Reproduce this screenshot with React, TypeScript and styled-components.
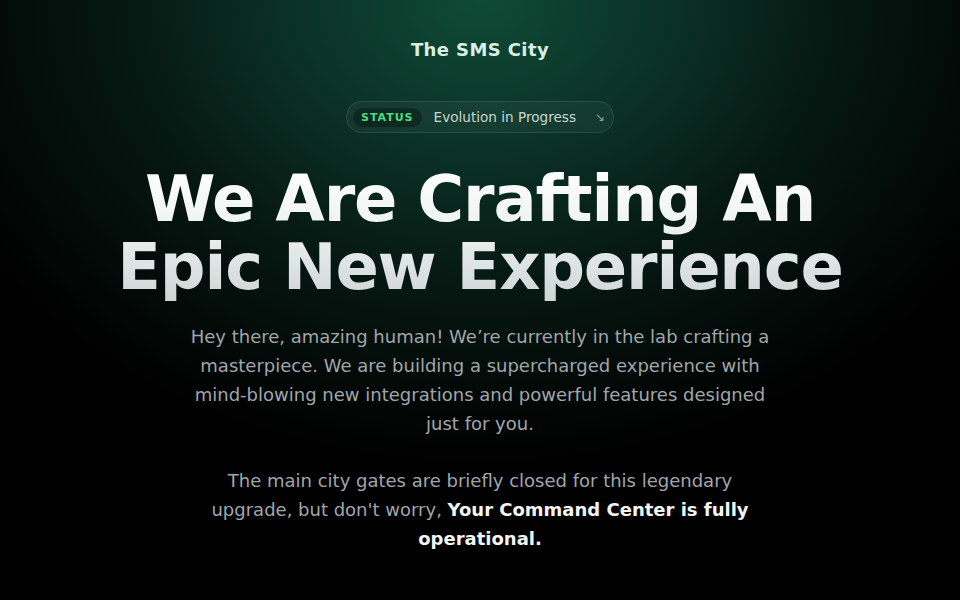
import React from "react";
import styled, { createGlobalStyle } from "styled-components";

const GlobalStyle = createGlobalStyle`
  html, body {
    margin: 0;
    padding: 0;
    background: #000;
  }
  body {
    font-family: "DejaVu Sans", "Noto Sans", sans-serif;
  }
`;

// whole page with the green glow on top
const Page = styled.div`
  min-height: 600px;
  display: flex;
  flex-direction: column;
  align-items: center;
  padding-top: 39px;
  box-sizing: border-box;
  background:
    radial-gradient(ellipse 62% 78% at 50% 0%, #0f4a36 0%, #0b3327 30%, #061812 60%, #000 100%);
`;

const Brand = styled.div`
  font-size: 18px;
  font-weight: 700;
  letter-spacing: 0.4px;
  color: #d9efe5;
  line-height: 22px;
`;

const Pill = styled.div`
  margin-top: 40px;
  display: flex;
  align-items: center;
  height: 30px;
  padding: 0 8px 0 6px;
  border-radius: 16px;
  background: rgba(255, 255, 255, 0.04);
  border: 1px solid rgba(255, 255, 255, 0.1);
`;

const Badge = styled.span`
  font-size: 11px;
  font-weight: 700;
  letter-spacing: 1px;
  color: #4ade80;
  background: rgba(0, 0, 0, 0.3);
  padding: 3px 8px;
  border-radius: 10px;
`;

const PillText = styled.span`
  margin-left: 12px;
  font-size: 13.6px;
  color: #c9d6d0;
`;

const Arrow = styled.span`
  margin-left: 19px;
  font-size: 12px;
  color: #8fa39a;
`;

const Heading = styled.h1`
  margin: 32px 0 0;
  text-align: center;
  font-size: 64px;
  line-height: 68px;
  font-weight: 700;
  letter-spacing: -1.2px;
  background: linear-gradient(180deg, #ffffff 0%, #eef3f1 45%, #cfd4d6 100%);
  -webkit-background-clip: text;
  background-clip: text;
  color: transparent;
`;

const Text = styled.p<{ $gap: number; $width: number }>`
  margin: ${(p) => p.$gap}px 0 0;
  max-width: ${(p) => p.$width}px;
  text-align: center;
  font-size: 18px;
  line-height: 29px;
  color: #a1a6ab;
  > b {
    color: #f3f5f4;
    font-weight: 700;
  }
`;

function App() {
  return (
    <>
      <GlobalStyle />
      <Page>
        <Brand>The SMS City</Brand>
        <Pill>
          <Badge>STATUS</Badge>
          <PillText>Evolution in Progress</PillText>
          <Arrow>↘</Arrow>
        </Pill>
        <Heading>
          We Are Crafting An
          <br />
          Epic New Experience
        </Heading>
        <Text $gap={21} $width={600}>
          Hey there, amazing human! We’re currently in the lab crafting a
          masterpiece. We are building a supercharged experience with
          mind-blowing new integrations and powerful features designed just
          for you.
        </Text>
        <Text $gap={28} $width={560}>
          The main city gates are briefly closed for this legendary upgrade,
          but don't worry, <b>Your Command Center is fully operational.</b>
        </Text>
      </Page>
    </>
  );
}

export default App;
